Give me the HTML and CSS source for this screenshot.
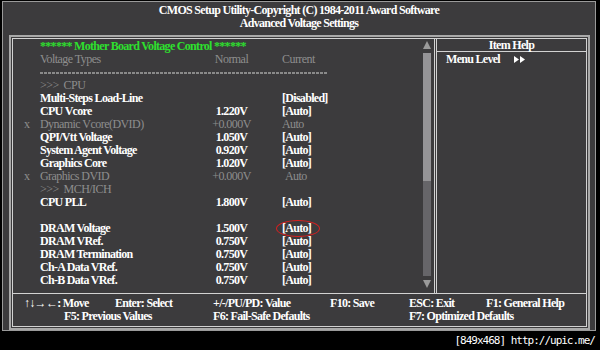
FILE: index.html
```html
<!DOCTYPE html>
<html lang="en">
<head>
  <meta charset="UTF-8">
  <title>Advanced Voltage Settings</title>
  <link rel="stylesheet" href="styles.css">
</head>
<body>
  <div class="screen">
    <div class="title">
      <div>CMOS Setup Utility-Copyright (C) 1984-2011 Award Software</div>
      <div>Advanced Voltage Settings</div>
    </div>

    <div class="main">
      <div class="frame">
        <div class="body">
          <div class="list">
            <div class="row green"><span class="mark"></span><span class="name wide">****** Mother Board Voltage Control ******</span></div>
            <div class="row dim"><span class="mark"></span><span class="name">Voltage Types</span><span class="normal">Normal</span><span class="current">Current</span></div>
            <div class="row"><span class="mark"></span><span class="dashes"></span></div>
            <div class="row dim"><span class="mark"></span><span class="name">&gt;&gt;&gt;&nbsp; CPU</span></div>
            <div class="row"><span class="mark"></span><span class="name">Multi-Steps Load-Line</span><span class="normal"></span><span class="current">[Disabled]</span></div>
            <div class="row"><span class="mark"></span><span class="name">CPU Vcore</span><span class="normal">1.220V</span><span class="current">[Auto]</span></div>
            <div class="row dim"><span class="mark">x</span><span class="name">Dynamic Vcore(DVID)</span><span class="normal">+0.000V</span><span class="current">Auto</span></div>
            <div class="row"><span class="mark"></span><span class="name">QPI/Vtt Voltage</span><span class="normal">1.050V</span><span class="current">[Auto]</span></div>
            <div class="row"><span class="mark"></span><span class="name">System Agent Voltage</span><span class="normal">0.920V</span><span class="current">[Auto]</span></div>
            <div class="row"><span class="mark"></span><span class="name">Graphics Core</span><span class="normal">1.020V</span><span class="current">[Auto]</span></div>
            <div class="row dim"><span class="mark">x</span><span class="name">Graphics DVID</span><span class="normal">+0.000V</span><span class="current shift">Auto</span></div>
            <div class="row dim"><span class="mark"></span><span class="name">&gt;&gt;&gt;&nbsp; MCH/ICH</span></div>
            <div class="row"><span class="mark"></span><span class="name">CPU PLL</span><span class="normal">1.800V</span><span class="current">[Auto]</span></div>
            <div class="row"></div>
            <div class="row"><span class="mark"></span><span class="name">DRAM Voltage</span><span class="normal">1.500V</span><span class="current">[Auto]<span class="circle"></span></span></div>
            <div class="row"><span class="mark"></span><span class="name">DRAM VRef.</span><span class="normal">0.750V</span><span class="current">[Auto]</span></div>
            <div class="row"><span class="mark"></span><span class="name">DRAM Termination</span><span class="normal">0.750V</span><span class="current">[Auto]</span></div>
            <div class="row"><span class="mark"></span><span class="name">Ch-A Data VRef.</span><span class="normal">0.750V</span><span class="current">[Auto]</span></div>
            <div class="row"><span class="mark"></span><span class="name">Ch-B Data VRef.</span><span class="normal">0.750V</span><span class="current">[Auto]</span></div>
          </div>

          <div class="scroll">
            <svg class="arrow" width="8" height="8" viewBox="0 0 8 8"><polygon points="4,0 8,8 0,8"/></svg>
            <div class="track"><div class="thumb"></div></div>
            <svg class="arrow" width="8" height="8" viewBox="0 0 8 8"><polygon points="0,0 8,0 4,8"/></svg>
          </div>

          <div class="divider"></div>

          <div class="help">
            <div class="help-head">Item Help</div>
            <div class="help-line">Menu Level
              <svg class="level" width="11" height="7" viewBox="0 0 11 7"><polygon points="0,0 5,3.5 0,7"/><polygon points="6,0 11,3.5 6,7"/></svg>
            </div>
          </div>
        </div>

        <div class="footer">
          <div class="keys first">
            <span class="k1">&uarr;&darr;&rarr;&larr;: Move</span>
            <span class="k2">Enter: Select</span>
            <span class="k3">+/-/PU/PD: Value</span>
            <span class="k4">F10: Save</span>
            <span class="k5">ESC: Exit</span>
            <span>F1: General Help</span>
          </div>
          <div class="keys second">
            <span class="k6">F5: Previous Values</span>
            <span class="k7">F6: Fail-Safe Defaults</span>
            <span>F7: Optimized Defaults</span>
          </div>
        </div>
      </div>
    </div>
  </div>

  <div class="watermark">[849x468] http://upic.me/</div>
</body>
</html>
```

FILE: styles.css
```css
/* Screen */
body {
  margin: 0;
  background-color: #000;
  font-family: "Liberation Serif", "Times New Roman", serif;
  font-size: 12px;
  color: #fff;
}

.screen {
  margin: 1px 0 0 2px;
  width: 592px;
  height: 328px;
  border: 1px solid #9a9a9a;
  background-color: #3c3b3d;
  font-weight: bold;
  letter-spacing: -0.7px;
}

.title {
  padding-top: 2px;
  text-align: center;
  line-height: 13px;
}

/* Double frame */
.main {
  margin: 5px 0 0 6px;
  width: 575px;
  border: 2px solid #a9a9a9;
  padding: 1px;
}

.frame {
  border: 1px solid #d2d2d2;
  height: 287px;
}

.body {
  display: flex;
  height: 254px;
  border-bottom: 1px solid #d2d2d2;
}

/* Option list */
.list {
  width: 410px;
  padding-top: 1px;
}

.row {
  display: flex;
  height: 13px;
  line-height: 13px;
  white-space: nowrap;
}

.row.dim {
  color: #8e8e8e;
  font-weight: normal;
  letter-spacing: -0.55px;
}

.row.green {
  color: #2ee02e;
}

.mark {
  width: 16px;
  padding-left: 11px;
}

.name {
  width: 155px;
}

.name.wide {
  width: auto;
}

.normal {
  width: 73px;
  text-align: center;
}

.current {
  position: relative;
  padding-left: 14px;
}

.current.shift {
  padding-left: 17px;
}

.circle {
  position: absolute;
  left: 8px;
  top: -2px;
  width: 42px;
  height: 15px;
  border: 1.5px solid #d82020;
  border-radius: 50%;
}

.dashes {
  width: 287px;
  height: 2px;
  margin-top: 6px;
  background: repeating-linear-gradient(90deg, #8a8a8a 0 3px, transparent 3px 4px);
}

/* Scrollbar */
.scroll {
  width: 8px;
  margin-right: 3px;
  display: flex;
  flex-direction: column;
  padding-top: 2px;
}

.arrow {
  display: block;
  fill: #9a9a9a;
}

.track {
  margin: 4px 0;
  height: 223px;
  background-color: #666569;
}

.thumb {
  height: 128px;
  background-color: #959497;
}

.divider {
  width: 1px;
  border-left: 1px solid #d2d2d2;
  border-right: 1px solid #d2d2d2;
}

/* Item help */
.help {
  flex: 1;
}

.help-head {
  height: 12px;
  line-height: 13px;
  text-align: center;
  border-bottom: 1px solid #d2d2d2;
}

.help-line {
  padding: 1px 0 0 9px;
  line-height: 13px;
}

.level {
  margin-left: 12px;
  fill: #fff;
}

/* Key legend */
.footer {
  padding-top: 3px;
}

.keys {
  display: flex;
  line-height: 13px;
  white-space: nowrap;
}

.first {
  padding-left: 11px;
}

.second {
  padding-left: 51px;
}

.k1 { width: 91px; }
.k2 { width: 98px; }
.k3 { width: 117px; }
.k4 { width: 79px; }
.k5 { width: 77px; }
.k6 { width: 149px; }
.k7 { width: 196px; }

.watermark {
  height: 19px;
  line-height: 19px;
  padding-right: 5px;
  text-align: right;
  font-family: "DejaVu Sans Mono", monospace;
  font-size: 11px;
  letter-spacing: -1px;
}
```
